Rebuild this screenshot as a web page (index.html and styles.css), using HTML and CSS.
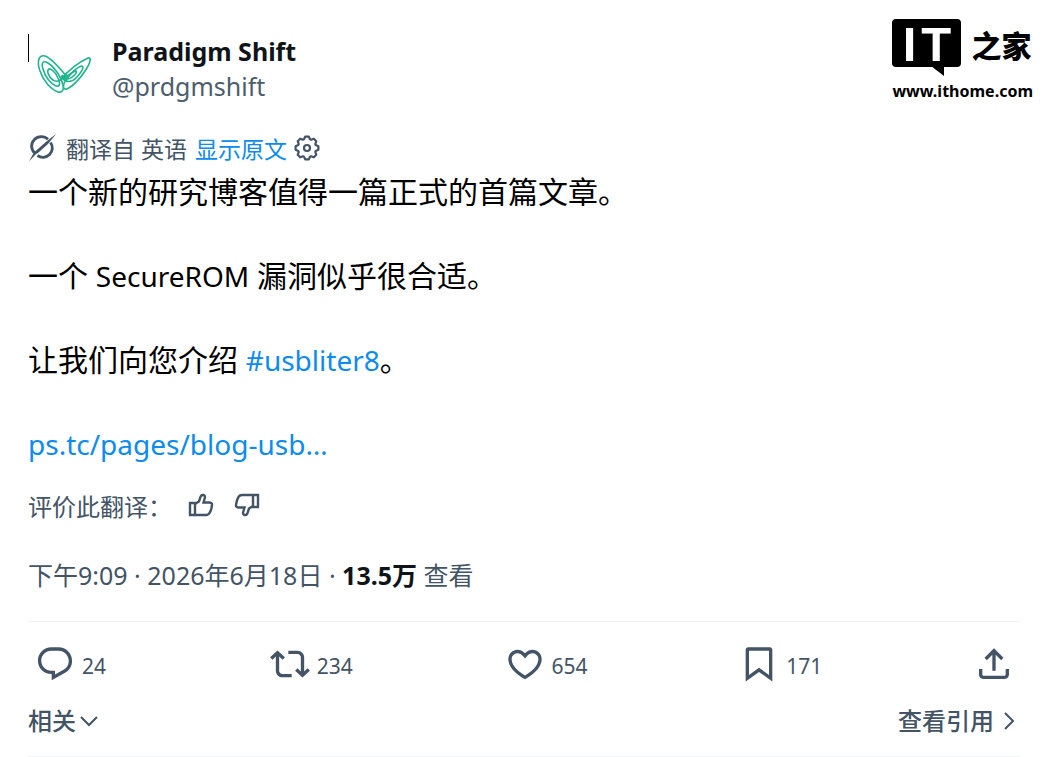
FILE: index.html
```
<!DOCTYPE html>
<html lang="zh-CN">

<head>
    <meta charset="UTF-8">
    <meta name="viewport" content="width=device-width, initial-scale=1.0">
    <title>Paradigm Shift</title>
    <link rel="stylesheet" href="styles.css">
</head>

<body>
    <div class="watermark">
        <div class="watermark-logo">
            <div class="bubble"><span>I</span><span>T</span></div>
            <span class="brand">之家</span>
        </div>
        <div class="watermark-url">www.ithome.com</div>
    </div>

    <article class="post">
        <header class="author">
            <span class="caret"></span>
            <svg class="avatar" viewBox="0 0 70 70" aria-hidden="true">
                <g fill="none" stroke="#1fb58c" stroke-width="1.6">
                    <path d="M39 44C33 37 24 25 16 22C9 20 8 29 11 37C14 46 21 55 29 58C34 59 35 55 34 51C33 46 28 35 19 29C14 26 12 29 14 35C16 43 22 50 27 52C32 53 31 48 29 44C27 39 22 34 20 35C17 37 20 43 24 46C29 50 34 44 38 40" />
                    <path d="M30 47C38 38 48 29 59 24C63 23 61 29 58 34C53 42 46 51 38 55C33 56 34 50 37 46C41 40 48 33 53 32C56 33 51 40 47 44C43 48 37 50 32 42" />
                    <path d="M34 46C38 42 43 38 47 37C49 38 44 44 39 45Q36 45 33 41" />
                </g>
            </svg>
            <div class="names">
                <a class="name" href="#">Paradigm Shift</a>
                <a class="handle" href="#">@prdgmshift</a>
            </div>
        </header>

        <div class="translation">
            <svg class="icon-small" viewBox="0 0 28 28" aria-hidden="true">
                <g fill="none" stroke="currentColor" stroke-width="2.8">
                    <path d="M20 5.300A9.300 9.300 0 0 0 6.500 19" />
                    <path d="M22.500 8.500A9.300 9.300 0 0 1 9.500 21.500" />
                </g>
                <path fill="currentColor" d="M28 0L20 10L10.500 18.500L7.500 20.500L1 27.500L4.500 21L7 17.500L19 7Z" />
            </svg>
            <span class="source">翻译自 英语</span>
            <a href="#">显示原文</a>
            <button class="settings" type="button" aria-label="翻译设置">
                <svg class="icon-small" viewBox="0 0 28 28" aria-hidden="true">
                    <g fill="none" stroke="currentColor" stroke-width="2.200" stroke-linejoin="round">
                        <path d="M11 5.300L12.200 2.600H15.800L17 5.300L18 5.700L20.800 4.700L23.300 7.200L22.300 10L22.700 11L25.400 12.200V15.800L22.700 17L22.300 18L23.300 20.800L20.800 23.300L18 22.300L17 22.700L15.800 25.400H12.200L11 22.700L10 22.300L7.200 23.300L4.700 20.800L5.700 18L5.300 17L2.600 15.800V12.200L5.300 11L5.700 10L4.700 7.200L7.200 4.700L10 5.700Z" />
                        <circle cx="14" cy="14" r="3" />
                    </g>
                </svg>
            </button>
        </div>

        <div class="text">
            <p>一个新的研究博客值得一篇正式的首篇文章。</p>
            <p>一个 <span class="latin">SecureROM</span> 漏洞似乎很合适。</p>
            <p>让我们向您介绍 <a class="latin" href="#">#usbliter8</a>。</p>
            <p><a class="latin" href="#">ps.tc/pages/blog-usb…</a></p>
        </div>

        <div class="rating">
            <span>评价此翻译：</span>
            <button type="button" aria-label="赞">
                <svg class="thumb" viewBox="0 0 26 26" aria-hidden="true">
                    <path d="M2 11H7V23H2ZM7 12L11 9.500L12.500 5Q13.200 2.500 15.500 3Q17.500 3.700 16.800 6L15.500 10.500H21Q24.300 10.500 24 13Q23.400 18 21.800 20.500Q20.500 23 18 23H5" />
                </svg>
            </button>
            <button type="button" aria-label="踩">
                <svg class="thumb thumb-down" viewBox="0 0 26 26" aria-hidden="true">
                    <path d="M2 11H7V23H2ZM7 12L11 9.500L12.500 5Q13.200 2.500 15.500 3Q17.500 3.700 16.800 6L15.500 10.500H21Q24.300 10.500 24 13Q23.400 18 21.800 20.500Q20.500 23 18 23H5" />
                </svg>
            </button>
        </div>

        <div class="meta"><time datetime="2026-06-18T21:09">下午9:09 · 2026年6月18日</time> · <strong>13.5万</strong> 查看</div>

        <div class="actions">
            <button type="button" aria-label="24 回复">
                <svg viewBox="0 0 24 24" aria-hidden="true">
                    <path d="M1.751 10c0-4.420 3.584-8 8.005-8h4.366c4.490 0 8.129 3.640 8.129 8.130 0 2.960-1.607 5.680-4.196 7.110l-8.054 4.460v-3.690h-.067c-4.490.100-8.183-3.510-8.183-8.010zm8.005-6c-3.317 0-6.005 2.690-6.005 6 0 3.370 2.770 6.080 6.138 6.010l.351-.010h1.761v2.300l5.087-2.810c1.951-1.080 3.163-3.130 3.163-5.360 0-3.390-2.744-6.130-6.129-6.130H9.756z" />
                </svg>
                <span>24</span>
            </button>
            <button type="button" aria-label="234 转帖">
                <svg viewBox="0 0 24 24" aria-hidden="true">
                    <path d="M4.500 3.880l4.432 4.140-1.364 1.460L5.500 7.550V16c0 1.100.896 2 2 2H13v2H7.500c-2.209 0-4-1.790-4-4V7.550L1.432 9.480.068 8.020 4.500 3.880zM16.500 6H11V4h5.500c2.209 0 4 1.790 4 4v8.450l2.068-1.930 1.364 1.460-4.432 4.140-4.432-4.140 1.364-1.460 2.068 1.930V8c0-1.100-.896-2-2-2z" />
                </svg>
                <span>234</span>
            </button>
            <button type="button" aria-label="654 喜欢">
                <svg viewBox="0 0 24 24" aria-hidden="true">
                    <path d="M16.697 5.500c-1.222-.060-2.679.510-3.890 2.160l-.805 1.090-.806-1.090C9.984 6.010 8.526 5.440 7.304 5.500c-1.243.070-2.349.780-2.910 1.910-.552 1.120-.633 2.780.479 4.820 1.074 1.970 3.257 4.270 7.129 6.610 3.870-2.340 6.052-4.640 7.126-6.610 1.111-2.040 1.030-3.700.477-4.820-.561-1.130-1.666-1.840-2.908-1.910zm4.187 7.690c-1.351 2.480-4.001 5.120-8.379 7.670l-.503.300-.504-.300c-4.379-2.550-7.029-5.190-8.382-7.670-1.360-2.500-1.410-4.860-.514-6.670.887-1.790 2.647-2.910 4.601-3.010 1.651-.090 3.368.560 4.798 2.010 1.429-1.450 3.146-2.100 4.796-2.010 1.954.100 3.714 1.220 4.601 3.010.896 1.810.846 4.170-.514 6.670z" />
                </svg>
                <span>654</span>
            </button>
            <button type="button" aria-label="171 书签">
                <svg viewBox="0 0 24 24" aria-hidden="true">
                    <path d="M4 3.500C4 2.670 4.670 2 5.500 2h13C19.330 2 20 2.670 20 3.500v18.940l-8-5.710-8 5.710V3.500zM6 4v14.560l6-4.290 6 4.290V4H6z" />
                </svg>
                <span>171</span>
            </button>
            <button type="button" aria-label="分享">
                <svg viewBox="0 0 24 24" aria-hidden="true">
                    <path d="M12 2.590l5.700 5.700-1.410 1.420L13 6.410V16h-2V6.410l-3.300 3.300-1.410-1.420L12 2.590zM21 15l-.020 3.510c0 1.380-1.120 2.490-2.500 2.490H5.500C4.110 21 3 19.880 3 18.500V15h2v3.500c0 .280.220.500.500.500h12.980c.280 0 .500-.220.500-.500L19 15h2z" />
                </svg>
            </button>
        </div>

        <footer class="links">
            <button type="button">相关
                <svg viewBox="0 0 20 20" aria-hidden="true"><path d="M3 8L11 16L19 8" /></svg>
            </button>
            <a href="#">查看引用
                <svg viewBox="0 0 20 20" aria-hidden="true"><path d="M5 4L13 12L5 20" /></svg>
            </a>
        </footer>
    </article>
</body>

</html>
```
FILE: styles.css
```
* {
    box-sizing: border-box;
}

body {
    margin: 0;
    background: #fff;
    color: #0f1419;
    font-family: "Noto Sans", "Noto Sans CJK SC", sans-serif;
}

a {
    color: #0c8bf0;
    text-decoration: none;
}

button {
    display: flex;
    align-items: center;
    padding: 0;
    border: 0;
    background: none;
    color: inherit;
    font: inherit;
    cursor: pointer;
}

svg {
    display: block;
    flex-shrink: 0;
}

.post {
    padding: 34px 28px 0;
    color: #425466;
}

/* author */
.author {
    display: flex;
    height: 72px;
}

.caret {
    width: 1px;
    height: 28px;
    background: #000;
}

.avatar {
    width: 70px;
    height: 70px;
}

.names {
    display: flex;
    flex-direction: column;
    margin-left: 13px;
    font-size: 25px;
    line-height: 35px;
}

.name {
    color: #0f1419;
    font-weight: bold;
}

.handle {
    color: #4c5d6c;
}

/* translation notice */
.translation {
    display: flex;
    align-items: center;
    gap: 8px;
    height: 42px;
    margin-top: 21px;
    font-size: 23px;
}

.icon-small {
    width: 28px;
    height: 28px;
}

.source {
    margin-left: 2px;
}

.settings {
    margin-left: -2px;
}

.text {
    margin-top: 2px;
    color: #000;
    font-size: 30px;
    line-height: 42px;
}

.text p {
    margin: 0 0 42px;
}

.text p:last-child {
    margin-bottom: 0;
}

.latin {
    font-size: 28px;
}

.rating {
    display: flex;
    align-items: center;
    gap: 20px;
    height: 42px;
    margin-top: 19px;
    font-size: 24px;
}

.rating span {
    margin-right: -4px;
}

.thumb {
    width: 26px;
    height: 26px;
    fill: none;
    stroke: currentColor;
    stroke-width: 2.4;
}

.thumb-down {
    transform: rotate(180deg);
}

.meta {
    margin-top: 28px;
    padding-bottom: 25px;
    border-bottom: 1px solid #eff3f4;
    font-size: 25px;
    line-height: 42px;
}

.meta strong {
    color: #0f1419;
}

/* action bar */
.actions {
    display: grid;
    grid-template-columns: repeat(4, 1fr) auto;
    padding: 22px 6px 0 7px;
    font-size: 21px;
}

.actions button {
    gap: 7px;
    height: 40px;
}

.actions span {
    padding-top: 4px;
}

.actions svg {
    width: 40px;
    height: 40px;
    fill: currentColor;
}

.links {
    display: flex;
    justify-content: space-between;
    align-items: center;
    height: 73px;
    padding-bottom: 2px;
    border-bottom: 1px solid #eff3f4;
    font-size: 24px;
    font-weight: 500;
}

.links a {
    display: flex;
    align-items: center;
    gap: 6px;
    color: inherit;
}

.links button {
    gap: 2px;
}

.links svg {
    width: 20px;
    height: 20px;
    overflow: visible;
    fill: none;
    stroke: currentColor;
    stroke-width: 2;
}

/* site mark over the top right corner */
.watermark {
    position: absolute;
    top: 19px;
    right: 15px;
    color: #000;
}

.watermark-logo {
    display: flex;
    gap: 10px;
}

.bubble {
    position: relative;
    display: flex;
    justify-content: center;
    gap: 5px;
    width: 69px;
    height: 48px;
    border-radius: 4px;
    background: #000;
    color: #fff;
    font: bold 49px/50px "Liberation Sans", sans-serif;
}

.bubble::after {
    content: "";
    position: absolute;
    top: 47px;
    right: 17px;
    border-top: 10px solid #000;
    border-left: 13px solid transparent;
}

.brand {
    font-family: "Noto Sans CJK SC", sans-serif;
    font-size: 30px;
    font-weight: 900;
    line-height: 50px;
}

.watermark-url {
    margin-top: 10px;
    font-size: 16px;
    font-weight: bold;
    line-height: 24px;
}
```
